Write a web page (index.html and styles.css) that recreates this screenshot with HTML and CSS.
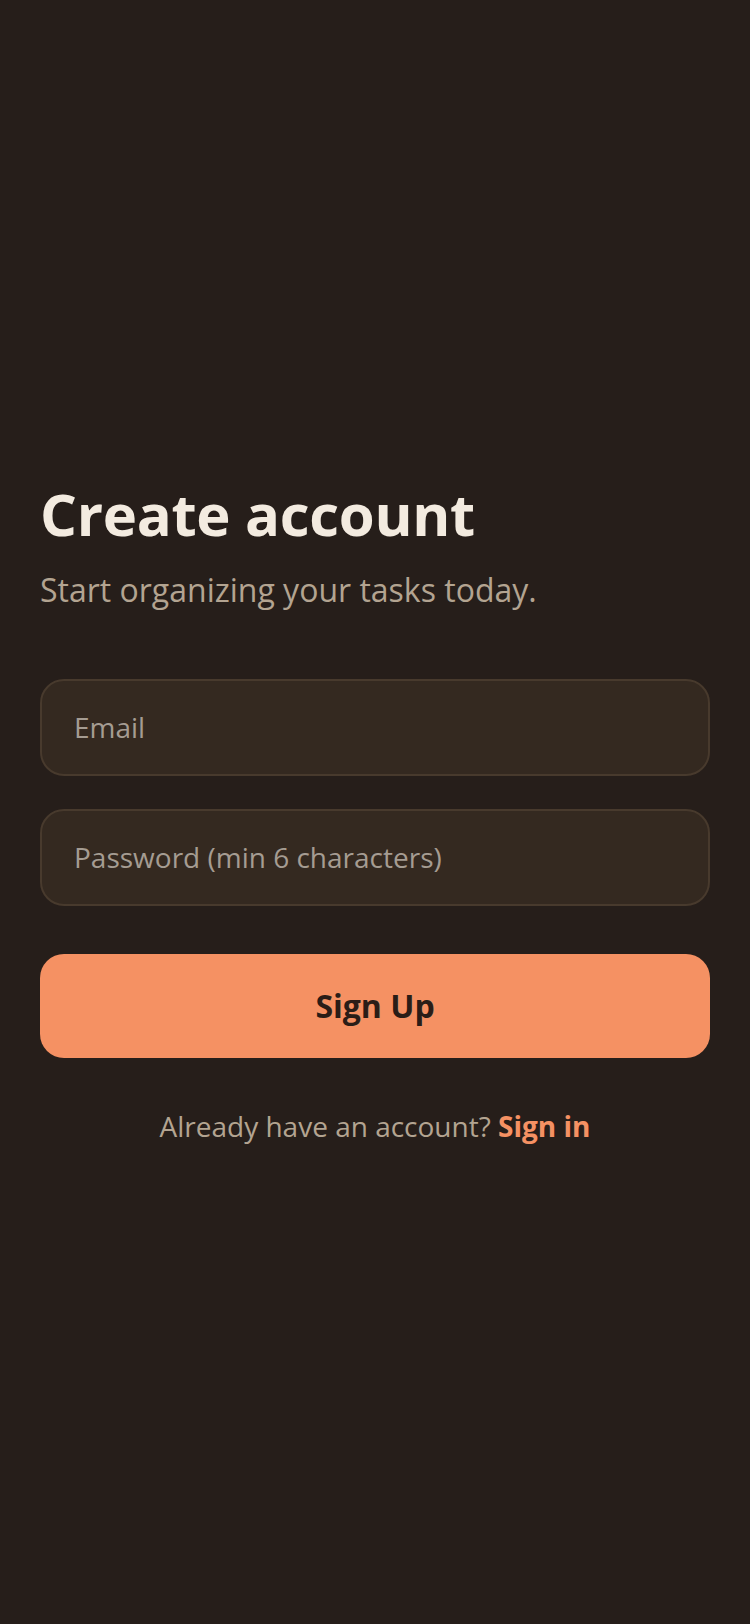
FILE: index.html
```html
<!DOCTYPE html>
<html lang="en">
<head>
<meta charset="utf-8">
<meta name="viewport" content="width=device-width, initial-scale=1">
<title>Create account</title>
<link rel="stylesheet" href="styles.css">
</head>
<body>
<main class="screen">
  <section class="auth">
    <h1 class="auth-title">Create account</h1>
    <p class="auth-subtitle">Start organizing your tasks today.</p>
    <form class="auth-form">
      <input class="field" type="email" placeholder="Email">
      <input class="field" type="password" placeholder="Password (min 6 characters)">
      <button class="primary-btn" type="button">Sign Up</button>
    </form>
    <p class="switch">Already have an account? <a class="switch-link" href="#">Sign in</a></p>
  </section>
</main>
</body>
</html>
```
FILE: styles.css
```css
* { box-sizing: border-box; }
html, body {
  margin: 0;
  padding: 0;
  background: #261e1a;
}
body {
  font-family: "Open Sans", "Noto Sans", sans-serif;
}
.screen {
  min-height: 1624px;
  display: flex;
  flex-direction: column;
  justify-content: center;
  padding: 2px 40px 0;
}
.auth {
  display: flex;
  flex-direction: column;
}
.auth-title {
  margin: 0;
  font-size: 58px;
  line-height: 67px;
  font-weight: 700;
  color: #f3ebe0;
  letter-spacing: -0.3px;
}
.auth-subtitle {
  margin: 22px 0 0;
  font-size: 32px;
  line-height: 42px;
  color: #b3a491;
}
.auth-form {
  margin-top: 68px;
  display: flex;
  flex-direction: column;
}
.field {
  height: 97px;
  margin: 0 0 33px;
  padding: 0 32px;
  border: 2px solid #483a2d;
  border-radius: 24px;
  background: #342920;
  font-family: inherit;
  font-size: 28px;
  color: #f3ebe0;
  outline: none;
}
.field::placeholder { color: #a59c92; }
.primary-btn {
  margin-top: 15px;
  height: 104px;
  border: none;
  border-radius: 24px;
  background: #f59163;
  color: #2a1d17;
  font-family: inherit;
  font-size: 32px;
  font-weight: 700;
}
.switch {
  margin: 47px 0 0;
  text-align: center;
  font-size: 28px;
  line-height: 42px;
  color: #b3a491;
}
.switch-link {
  color: #f59163;
  font-weight: 700;
  text-decoration: none;
}
```
